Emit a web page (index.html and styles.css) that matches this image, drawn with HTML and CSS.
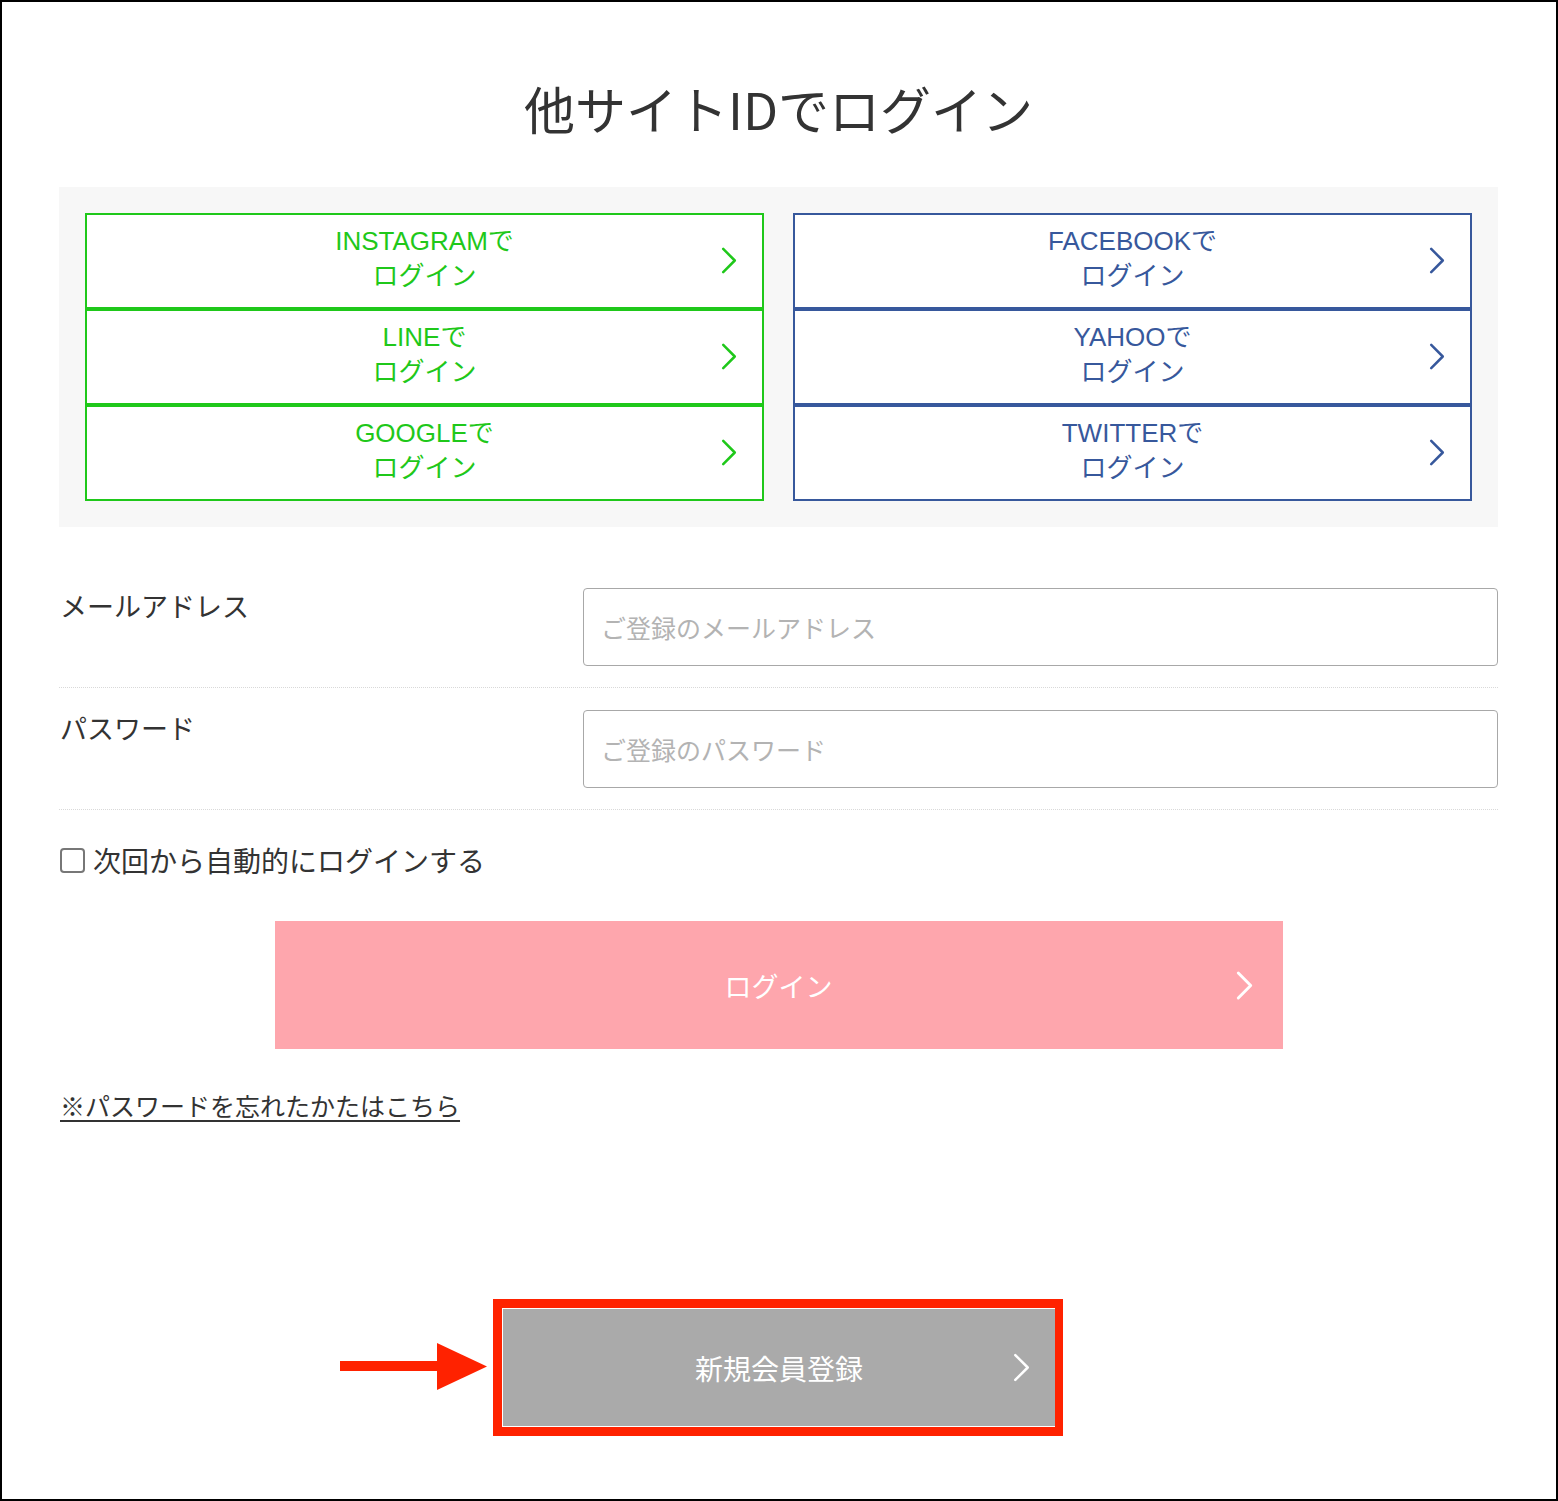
FILE: index.html
```html
<!DOCTYPE html>
<html lang="ja">
<head>
<meta charset="utf-8">
<title>他サイトIDでログイン</title>
<link rel="stylesheet" href="styles.css">
</head>
<body>
<div class="frame">
  <h1 class="title">他サイトIDでログイン</h1>

  <div class="social-panel">
    <div class="social-col">
      <a class="sbtn green" href="#"><span class="stext">INSTAGRAMで<br>ログイン</span><svg class="chev" viewBox="0 0 16 28"><polyline points="2,2 14,14 2,26"/></svg></a>
      <a class="sbtn green" href="#"><span class="stext">LINEで<br>ログイン</span><svg class="chev" viewBox="0 0 16 28"><polyline points="2,2 14,14 2,26"/></svg></a>
      <a class="sbtn green" href="#"><span class="stext">GOOGLEで<br>ログイン</span><svg class="chev" viewBox="0 0 16 28"><polyline points="2,2 14,14 2,26"/></svg></a>
    </div>
    <div class="social-col">
      <a class="sbtn blue" href="#"><span class="stext">FACEBOOKで<br>ログイン</span><svg class="chev" viewBox="0 0 16 28"><polyline points="2,2 14,14 2,26"/></svg></a>
      <a class="sbtn blue" href="#"><span class="stext">YAHOOで<br>ログイン</span><svg class="chev" viewBox="0 0 16 28"><polyline points="2,2 14,14 2,26"/></svg></a>
      <a class="sbtn blue" href="#"><span class="stext">TWITTERで<br>ログイン</span><svg class="chev" viewBox="0 0 16 28"><polyline points="2,2 14,14 2,26"/></svg></a>
    </div>
  </div>

  <div class="form">
    <div class="frow">
      <label class="flabel">メールアドレス</label>
      <input class="finput" type="text" placeholder="ご登録のメールアドレス">
    </div>
    <div class="frow">
      <label class="flabel">パスワード</label>
      <input class="finput" type="password" placeholder="ご登録のパスワード">
    </div>
  </div>

  <label class="remember"><input type="checkbox" class="cb"><span>次回から自動的にログインする</span></label>

  <a class="login-btn" href="#"><span class="btext">ログイン</span><svg class="chev wchev" viewBox="0 0 16 28"><polyline points="2,2 14,14 2,26"/></svg></a>

  <a class="forgot" href="#">※パスワードを忘れたかたはこちら</a>

  <div class="register-row">
    <svg class="arrow" viewBox="0 0 148 48" width="148" height="48">
      <rect x="0" y="18" width="100" height="10" fill="#ff2200"/>
      <polygon points="97,0 147,23.5 97,47" fill="#ff2200"/>
    </svg>
    <div class="reg-frame">
      <a class="reg-btn" href="#"><span class="btext">新規会員登録</span><svg class="chev wchev2" viewBox="0 0 16 28"><polyline points="2,2 14,14 2,26"/></svg></a>
    </div>
  </div>
</div>
</body>
</html>
```

FILE: styles.css
```css
* { box-sizing: border-box; }
html, body { margin: 0; padding: 0; background: #fff; }
body {
  font-family: "Liberation Sans", "Noto Sans CJK JP", sans-serif;
  color: #333;
}
.frame {
  width: 1558px;
  height: 1501px;
  border: 2px solid #000;
  padding: 76px 58px 0 57px;
  overflow: hidden;
}
.title {
  margin: 0;
  font-weight: 400;
  font-size: 51px;
  line-height: 60px;
  text-align: center;
  color: #333;
  font-family: "Noto Sans CJK JP", "Liberation Sans", sans-serif;
}
.social-panel {
  margin-top: 49px;
  background: #f7f7f7;
  padding: 26px;
  display: grid;
  grid-template-columns: 1fr 1fr;
  column-gap: 29px;
}
.social-col { display: flex; flex-direction: column; }
.sbtn {
  height: 96px;
  border: 2px solid;
  background: #fff;
  display: grid;
  grid-template-columns: 1fr auto 1fr;
  align-items: center;
  text-decoration: none;
  font-size: 26px;
  line-height: 35px;
  padding: 0 25px 4px;
}
.sbtn .stext { grid-column: 2; text-align: center; }
.sbtn .chev { grid-column: 3; justify-self: end; width: 16px; height: 27px; margin-top: 2px; }
.chev polyline { fill: none; stroke: currentColor; stroke-width: 2.6; stroke-linecap: round; stroke-linejoin: round; }
.green { color: #1fc81a; border-color: #1fc81a; }
.blue { color: #37589c; border-color: #37589c; }

.form { margin-top: 39px; }
.frow {
  display: grid;
  grid-template-columns: 524px 1fr;
  padding: 22px 0 21px;
  border-bottom: 1px dotted #d9d9d9;
  align-items: start;
}
.flabel {
  font-size: 27px;
  line-height: 36px;
  color: #333;
  font-family: "Noto Sans CJK JP", sans-serif;
  padding-left: 1px;
}
.finput {
  height: 78px;
  width: 100%;
  border: 1.5px solid #a8a8a8;
  border-radius: 4px;
  padding: 0 17px;
  font-size: 25px;
  font-family: "Noto Sans CJK JP", sans-serif;
  color: #333;
  background: #fff;
  outline: none;
}
.finput::placeholder { color: #b3b3b3; }

.remember {
  margin-top: 31px;
  display: flex;
  align-items: center;
  gap: 8px;
  font-size: 28px;
  line-height: 38px;
  font-family: "Noto Sans CJK JP", sans-serif;
  color: #333;
}
.cb {
  appearance: none;
  -webkit-appearance: none;
  width: 25px;
  height: 25px;
  margin: 0 0 0 1px;
  border: 2px solid #777;
  border-radius: 4px;
  background: #fff;
}

.login-btn {
  display: grid;
  grid-template-columns: 1fr auto 1fr;
  align-items: center;
  width: 1008px;
  height: 128px;
  margin: 42px auto 0;
  background: #fea6ad;
  color: #fff;
  text-decoration: none;
  font-size: 27px;
  font-family: "Noto Sans CJK JP", sans-serif;
  padding: 0 30px;
}
.btext { grid-column: 2; }
.wchev { grid-column: 3; justify-self: end; width: 17px; height: 29px; color: #fff; }
.wchev polyline { stroke-width: 2.8; }

.forgot {
  display: inline-block;
  margin-top: 38px;
  font-size: 25px;
  line-height: 36px;
  color: #333;
  font-family: "Noto Sans CJK JP", sans-serif;
  text-decoration: underline;
  text-underline-offset: 4px;
  text-decoration-thickness: 2px;
  padding-left: 1px;
}

.register-row {
  display: flex;
  align-items: center;
  gap: 5px;
  margin-top: 176px;
  padding-left: 281px;
}
.arrow { display: block; flex: none; margin-top: -2px; }
.reg-frame {
  width: 570px;
  height: 137px;
  border: 9px solid #ff2200;
  border-right-width: 8px;
  padding: 1px 0 1px 1px;
}
.reg-btn {
  display: grid;
  grid-template-columns: 1fr auto 1fr;
  align-items: center;
  height: 100%;
  background: #aaaaaa;
  color: #fff;
  text-decoration: none;
  font-size: 28px;
  font-family: "Noto Sans CJK JP", sans-serif;
  padding: 0 25px;
}
.wchev2 { grid-column: 3; justify-self: end; width: 17px; height: 29px; color: #fff; }
.wchev2 polyline { stroke-width: 2.4; }
```
